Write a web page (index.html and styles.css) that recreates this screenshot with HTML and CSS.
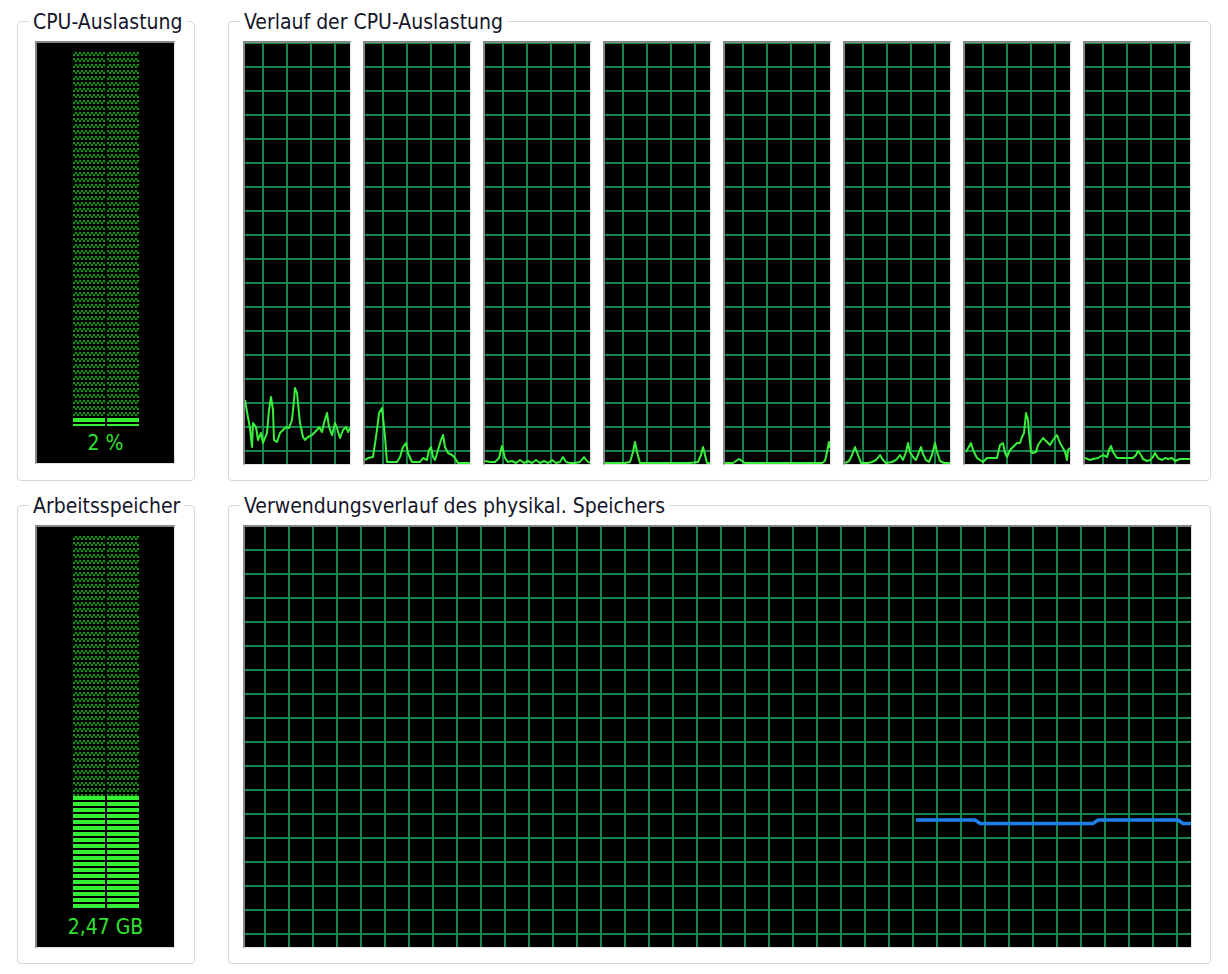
FILE: index.html
```html
<!DOCTYPE html>
<html lang="de">

<head>
    <meta charset="UTF-8">
    <title>Leistung</title>
    <link rel="stylesheet" href="styles.css">
</head>

<body>
    <div class="panel">
        <!-- CPU meter -->
        <div class="group">
            <div class="group-title">CPU-Auslastung</div>
            <div class="meter">
                <div class="meter-bars">
                    <div class="meter-col"><div class="meter-fill cpu-fill"></div></div>
                    <div class="meter-col"><div class="meter-fill cpu-fill"></div></div>
                </div>
                <div class="meter-value">2 %</div>
            </div>
        </div>

        <!-- CPU history, one graph per core -->
        <div class="group">
            <div class="group-title">Verlauf der CPU-Auslastung</div>
            <div class="graph-row">
                <div class="graph cpu-graph">
                    <svg viewBox="245 43 105 421">
                        <polyline class="cpu-line" points="245,400 247,412 250,428 252,447 253,423 256,427 258,440 261,433 263,443 267,433 269,410 271,397 273,410 274,440 277,442 280,433 283,430 286,427 289,428 292,420 294,400 295,388 297,393 298,403 300,423 303,437 305,440 308,437 312,435 317,430 319,427 322,432 324,423 327,413 329,427 332,435 335,423 337,428 340,438 343,430 346,427 348,432 350,428" />
                    </svg>
                </div>
                <div class="graph cpu-graph">
                    <svg viewBox="365 43 105 421">
                        <polyline class="cpu-line" points="365,460 368,458 373,457 377,430 379,413 382,408 383,417 385,437 387,462 390,462 397,462 400,457 403,447 406,443 408,453 412,462 420,462 423,458 427,460 429,450 431,447 433,457 435,460 438,450 441,440 443,435 445,447 448,453 452,455 455,458 458,463 470,463" />
                    </svg>
                </div>
                <div class="graph cpu-graph">
                    <svg viewBox="485 43 105 421">
                        <polyline class="cpu-line" points="485,461 490,462 495,462 499,458 502,446 505,458 508,462 512,461 516,463 520,460 524,463 528,461 532,463 536,460 540,463 544,461 548,463 552,460 556,463 560,462 563,457 566,462 570,463 575,463 580,462 584,457 587,461 590,463" />
                    </svg>
                </div>
                <div class="graph cpu-graph">
                    <svg viewBox="605 43 105 421">
                        <polyline class="cpu-line" points="605,463 615,463 625,463 630,462 633,452 635,442 637,452 640,463 650,463 660,463 670,463 680,463 690,463 698,462 701,455 703,447 705,455 707,463 710,463" />
                    </svg>
                </div>
                <div class="graph cpu-graph">
                    <svg viewBox="725 43 105 421">
                        <polyline class="cpu-line" points="725,463 733,463 736,461 739,459 742,461 745,463 760,463 780,463 800,463 815,463 822,463 825,461 827,452 829,442 830,448" />
                    </svg>
                </div>
                <div class="graph cpu-graph">
                    <svg viewBox="845 43 105 421">
                        <polyline class="cpu-line" points="845,463 849,461 852,455 855,447 858,455 861,463 868,463 872,462 876,460 880,455 883,460 886,463 892,462 896,460 900,455 903,460 906,452 908,443 910,452 913,457 916,460 919,452 921,447 923,454 926,460 929,462 932,455 935,443 937,452 940,461 944,463 950,463" />
                    </svg>
                </div>
                <div class="graph cpu-graph">
                    <svg viewBox="965 43 105 421">
                        <polyline class="cpu-line" points="966,452 971,443 973,450 977,458 980,460 983,462 987,458 992,458 997,458 1000,445 1003,443 1005,453 1007,457 1010,450 1013,447 1017,443 1020,443 1022,437 1024,433 1026,413 1028,420 1029,433 1031,452 1033,453 1036,452 1038,445 1043,438 1047,442 1050,445 1053,440 1057,435 1060,443 1063,448 1065,452 1067,460 1068,450 1070,448" />
                    </svg>
                </div>
                <div class="graph cpu-graph">
                    <svg viewBox="1085 43 105 421">
                        <polyline class="cpu-line" points="1085,458 1090,460 1093,459 1098,458 1103,455 1107,457 1109,450 1111,446 1113,452 1117,458 1123,458 1133,458 1136,455 1138,451 1141,455 1143,459 1147,461 1150,460 1153,457 1155,453 1158,458 1162,460 1165,458 1168,459 1172,458 1175,461 1180,459 1190,459" />
                    </svg>
                </div>
            </div>
        </div>

        <!-- memory meter -->
        <div class="group">
            <div class="group-title">Arbeitsspeicher</div>
            <div class="meter">
                <div class="meter-bars">
                    <div class="meter-col"><div class="meter-fill mem-fill"></div></div>
                    <div class="meter-col"><div class="meter-fill mem-fill"></div></div>
                </div>
                <div class="meter-value">2,47 GB</div>
            </div>
        </div>

        <!-- memory history -->
        <div class="group">
            <div class="group-title">Verwendungsverlauf des physikal. Speichers</div>
            <div class="graph-row">
                <div class="graph mem-graph">
                    <svg viewBox="245 527 946 420">
                        <polyline class="mem-line" points="916,820 975,820 980,823.5 1093,823.5 1098,820 1178,820 1183,823.5 1191,823.5" />
                    </svg>
                </div>
            </div>
        </div>
    </div>
</body>

</html>
```

FILE: styles.css
```css
body {
    margin: 0;
    background-color: #fff;
    font-family: "DejaVu Sans Condensed", "DejaVu Sans", sans-serif;
    font-size: 21px;
    color: #15152a;
}

.panel {
    display: grid;
    grid-template-columns: 178px 983px;
    column-gap: 33px;
    row-gap: 24px;
    padding: 21px 0 0 17px;
}

.group {
    border: 1px solid #d3d8df;
    border-radius: 4px;
    padding-bottom: 15px;
}

.group-title {
    width: fit-content;
    margin: -11px 0 0 11px;
    padding: 0 4px;
    background-color: #fff;
    line-height: 22px;
    white-space: nowrap;
}

/* sunken black boxes */
.meter,
.graph {
    box-sizing: border-box;
    background-color: #000;
    border-style: solid;
    border-width: 2px 1px 1px 2px;
    border-color: #868686 #e2e2e2 #e2e2e2 #868686;
}

.meter {
    width: 140px;
    height: 423px;
    margin: 8px 0 0 17px;
    padding-top: 9px;
}

.meter-bars {
    display: flex;
    justify-content: center;
    gap: 2px;
    height: 374px;
}

.meter-col {
    width: 32px;
    display: flex;
    flex-direction: column;
    justify-content: flex-end;
    background:
        repeating-linear-gradient(to bottom, transparent 0 4px, #000 4px 6px),
        conic-gradient(#178c17 25%, #021a02 0 50%, #178c17 0 75%, #021a02 0) 0 0 / 4px 4px;
}

.meter-fill {
    background: repeating-linear-gradient(to bottom, #35f035 0 4px, #000 4px 6px);
}

.cpu-fill {
    height: 8px;
}

.mem-fill {
    height: 114px;
}

.meter-value {
    margin-top: 6px;
    line-height: 22px;
    text-align: center;
    color: #2fe22f;
}

.graph-row {
    display: flex;
    gap: 12px;
    margin: 8px 0 0 14px;
}

.graph {
    background-image:
        linear-gradient(90deg, #17864a 2px, transparent 2px),
        linear-gradient(#17864a 2px, transparent 2px);
    background-size: 24px 24px;
}

.cpu-graph {
    width: 108px;
    height: 424px;
    background-position: 17px 23px;
}

.mem-graph {
    width: 949px;
    height: 423px;
    background-position: 19px 22px;
}

.graph svg {
    display: block;
    width: 100%;
    height: 100%;
}

.cpu-line {
    fill: none;
    stroke: #3af03a;
    stroke-width: 2;
    stroke-linejoin: round;
}

.mem-line {
    fill: none;
    stroke: #1e80e8;
    stroke-width: 3.5;
}
```
